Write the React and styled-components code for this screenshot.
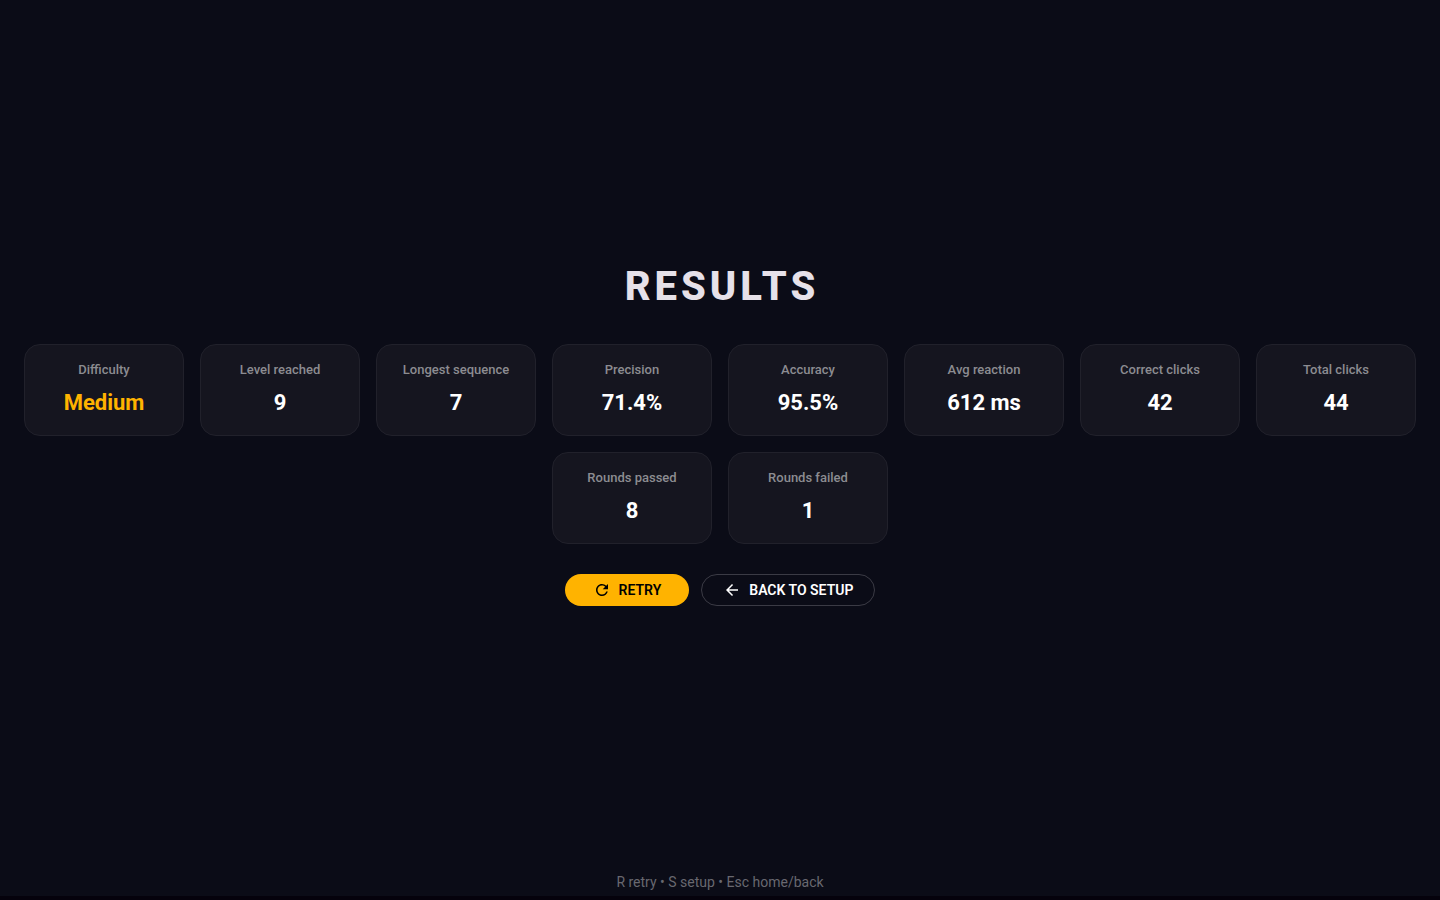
import React from "react";
import styled, { createGlobalStyle } from "styled-components";
import { MdArrowBack, MdRefresh } from "react-icons/md";

const stats = [
	{ label: "Difficulty", value: "Medium", highlight: true },
	{ label: "Level reached", value: "9" },
	{ label: "Longest sequence", value: "7" },
	{ label: "Precision", value: "71.4%" },
	{ label: "Accuracy", value: "95.5%" },
	{ label: "Avg reaction", value: "612 ms" },
	{ label: "Correct clicks", value: "42" },
	{ label: "Total clicks", value: "44" },
	{ label: "Rounds passed", value: "8" },
	{ label: "Rounds failed", value: "1" }
];

export default function App(){
	return (
		<>
			<GlobalStyle />
			<Page>
				<Content>
					<Title>RESULTS</Title>
					<StatsList>
						{stats.map(item => (
							<StatCard key={item.label}>
								<StatLabel>{item.label}</StatLabel>
								<StatValue $highlight={item.highlight}>{item.value}</StatValue>
							</StatCard>
						))}
					</StatsList>
					<Actions>
						<RetryButton type="button">
							<MdRefresh size={18} aria-hidden="true" />
							RETRY
						</RetryButton>
						<SetupButton type="button">
							<MdArrowBack size={18} aria-hidden="true" />
							BACK TO SETUP
						</SetupButton>
					</Actions>
				</Content>
				<Hint>R retry • S setup • Esc home/back</Hint>
			</Page>
		</>
	);
}

const GlobalStyle = createGlobalStyle`
	* {
		box-sizing: border-box;
	}
	body {
		margin: 0;
		background: #0b0c17;
		font-family: Roboto, sans-serif;
	}
`;

const Page = styled.div`
	min-height: 100vh;
	display: flex;
	flex-direction: column;
	border-bottom: 4px solid #05020c;
`;

const Content = styled.main`
	flex: 1;
	display: flex;
	flex-direction: column;
	align-items: center;
	justify-content: center;
	padding: 0 24px 4px;
`;

/* left padding balances the spacing after the last letter */
const Title = styled.h1`
	margin: 0 0 32px;
	padding-left: 4px;
	font-size: 40px;
	line-height: 50px;
	font-weight: 800;
	letter-spacing: 4px;
	color: #e6e1e9;
`;

const StatsList = styled.dl`
	margin: 0;
	display: flex;
	flex-wrap: wrap;
	justify-content: center;
	gap: 16px;
`;

const StatCard = styled.div`
	width: 160px;
	height: 92px;
	padding: 16px 12px;
	border: 1px solid #21212b;
	border-radius: 16px;
	background: #15151f;
	text-align: center;
`;

const StatLabel = styled.dt`
	margin-bottom: 9px;
	font-size: 13px;
	line-height: 18px;
	font-weight: 500;
	color: #8c8c91;
`;

const StatValue = styled.dd`
	margin: 0;
	font-size: 22px;
	line-height: 30px;
	font-weight: 700;
	color: ${({ $highlight }) => $highlight ? "#ffb300" : "#ffffff"};
`;

const Actions = styled.div`
	margin-top: 30px;
	display: flex;
	gap: 12px;
`;

const Button = styled.button`
	height: 32px;
	display: flex;
	align-items: center;
	gap: 8px;
	border-radius: 16px;
	font-family: inherit;
	font-size: 14px;
	font-weight: 600;
	cursor: pointer;
`;

const RetryButton = styled(Button)`
	padding: 0 28px;
	border: none;
	background: #ffb300;
	color: #000000;
`;

const SetupButton = styled(Button)`
	padding: 0 21px;
	border: 1px solid #3b3b45;
	background: transparent;
	color: #ffffff;
`;

const Hint = styled.footer`
	padding-bottom: 4px;
	font-size: 14px;
	line-height: 20px;
	font-weight: 400;
	text-align: center;
	color: #686870;
`;
